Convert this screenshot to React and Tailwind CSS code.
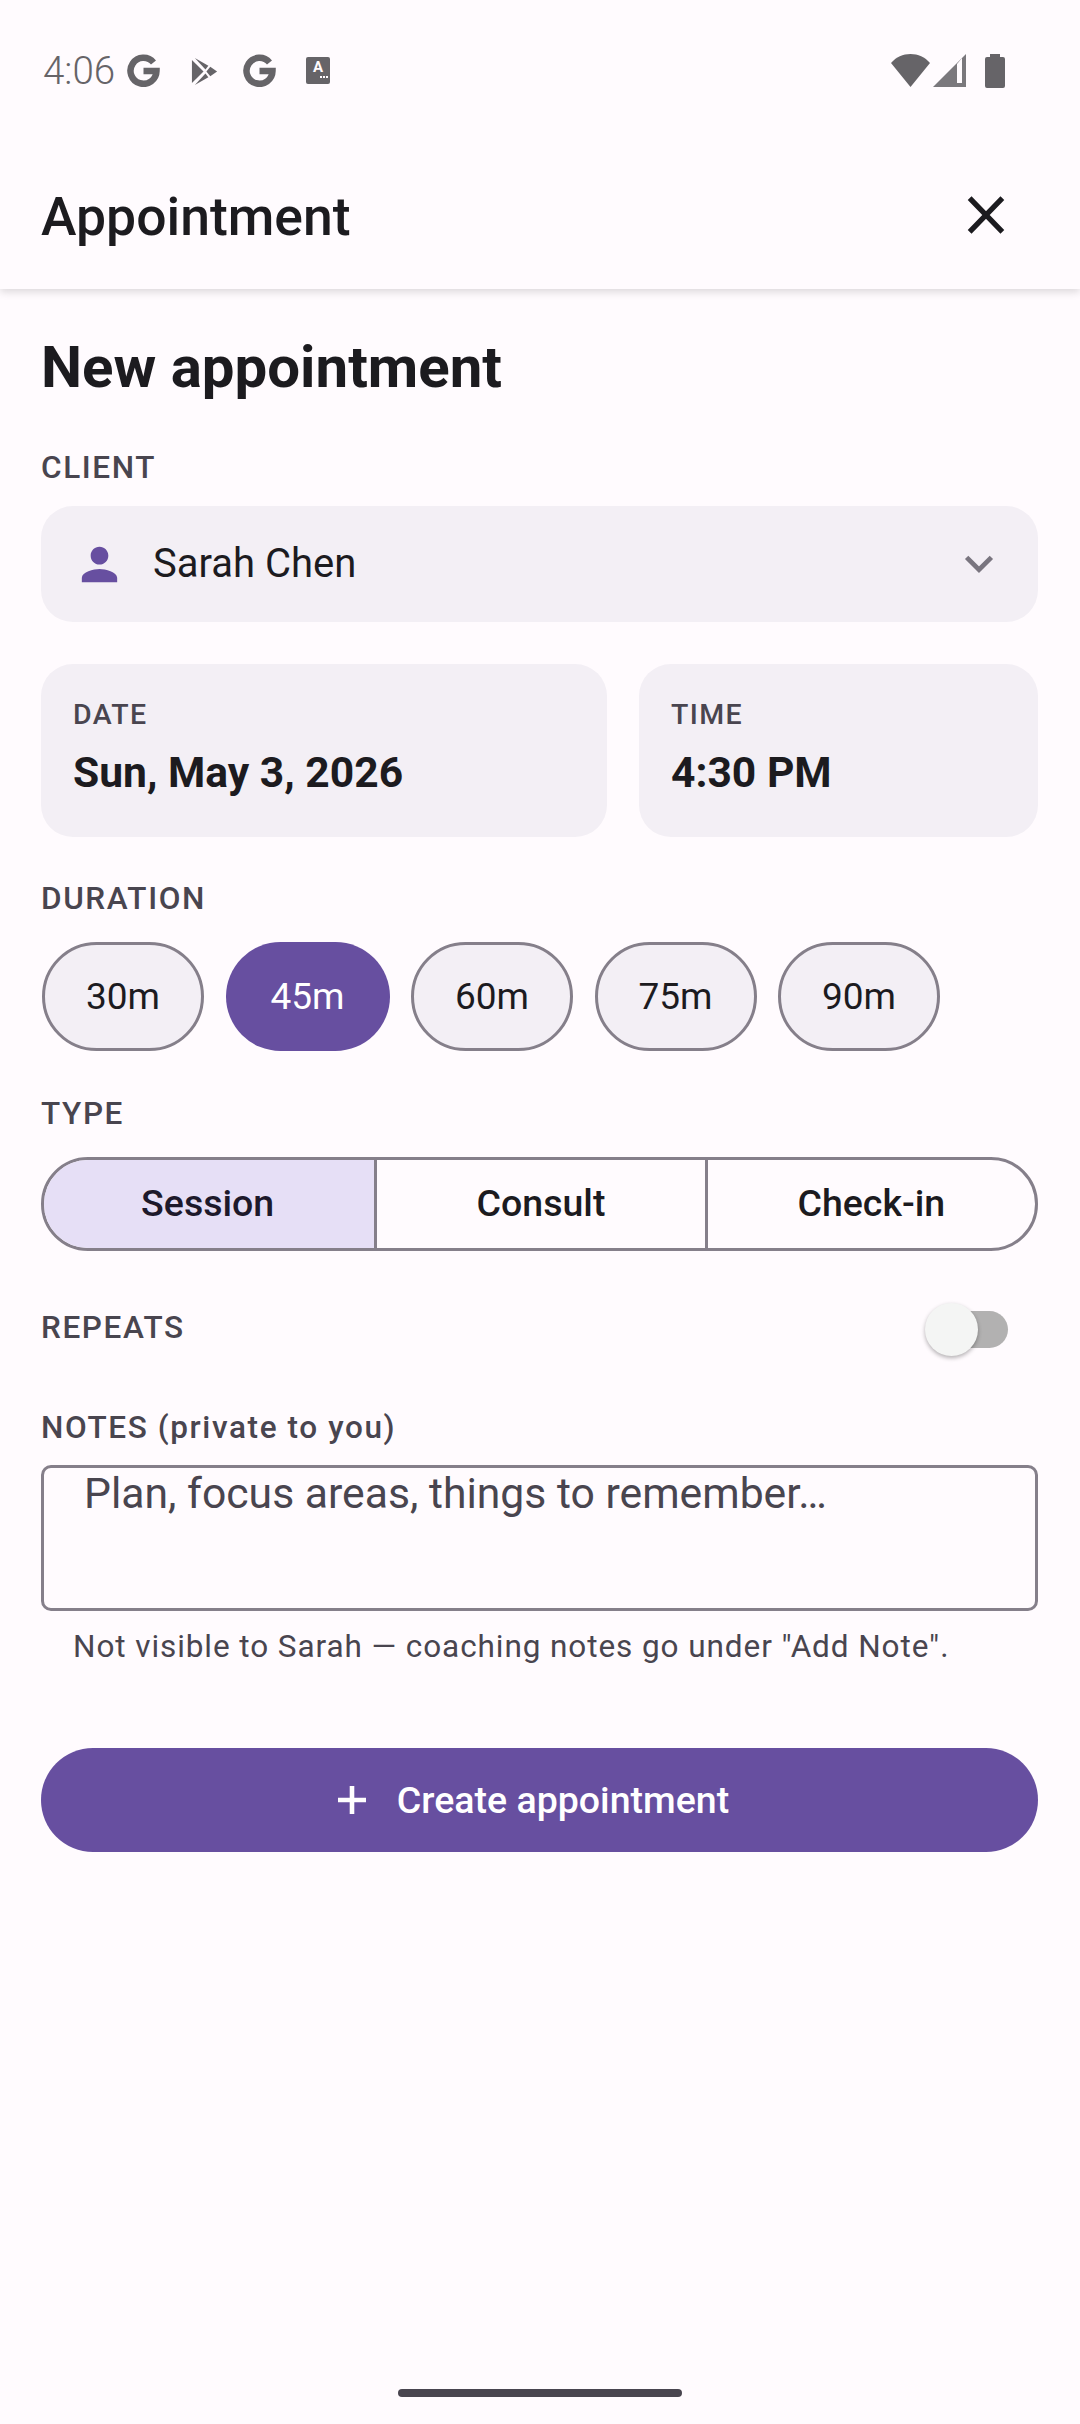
import React from "react";

const Label = ({ children, className = "" }) => (
  <div className={`text-[31.5px] leading-[40px] font-medium tracking-[1.6px] text-[#49454f] ${className}`}>
    {children}
  </div>
);

const StatusBar = () => (
  <div className="relative z-10 h-[92px] bg-[#fffbfe] pt-[48px] pl-[43px] pr-[75px] flex items-start text-[#666468]">
    <span className="text-[38.5px] leading-[42px] font-light w-[84px] mt-[2px]">4:06</span>
    <svg viewBox="0 0 32 33" className="w-[33px] h-[33px] mt-[6px]" fill="none">
      <path d="M26 8.500A13 13 0 1 0 29 17H16" stroke="currentColor" strokeWidth="6.500" />
    </svg>
    <svg viewBox="0 0 26 30" className="w-[27px] h-[29px] mt-[9px] ml-[31px]" fill="currentColor">
      <path d="M0 3 12 15 0 27Z" />
      <path d="M3 1 17 9 14 13Z" />
      <path d="M3 29 17 21 14 17Z" />
      <path d="M19 10 26 15 19 20 15 15Z" />
    </svg>
    <svg viewBox="0 0 32 33" className="w-[33px] h-[33px] mt-[6px] ml-[25px]" fill="none">
      <path d="M26 8.500A13 13 0 1 0 29 17H16" stroke="currentColor" strokeWidth="6.500" />
    </svg>
    <div className="w-[24px] h-[27px] mt-[9px] ml-[30px] bg-current rounded-[2px] flex flex-col items-center">
      <span className="text-[15px] leading-[15px] font-bold text-[#fffbfe] mt-[3px]">A</span>
      <span className="flex gap-[1px] mt-[1px] self-end mr-[2px]">
        <i className="w-[2px] h-[2px] bg-[#fffbfe]" />
        <i className="w-[2px] h-[2px] bg-[#fffbfe]" />
        <i className="w-[2px] h-[2px] bg-[#fffbfe]" />
      </span>
    </div>
    <div className="flex-1" />
    <svg viewBox="0 0 39 33" className="w-[39px] h-[33px] mt-[6px]" fill="currentColor">
      <path d="M0 9C5 3 12 0 19.500 0S34 3 39 9L19.500 33Z" />
    </svg>
    <svg viewBox="0 0 33 33" className="w-[33px] h-[33px] mt-[6px] ml-[3px]">
      <path d="M33 0V33H0Z" fill="#7a787c" />
      <path d="M24 10 29 4V29H24Z" fill="#fffbfe" />
    </svg>
    <svg viewBox="0 0 20 34" className="w-[20px] h-[34px] mt-[6px] ml-[19px]" fill="currentColor">
      <path d="M5 0H15V3H18A2 2 0 0 1 20 5V32A2 2 0 0 1 18 34H2A2 2 0 0 1 0 32V5A2 2 0 0 1 2 3H5Z" />
    </svg>
  </div>
);

const Chip = ({ label, selected }) => (
  <div
    className={`h-[109px] rounded-full flex items-center justify-center text-[37px] ${
      selected
        ? "w-[164px] bg-[#674fa0] text-white"
        : "w-[162px] bg-[#f3eff5] border-[3px] border-[#857f8a] text-[#1c1b1f]"
    }`}
  >
    {label}
  </div>
);

const Segment = ({ label, selected, className = "" }) => (
  <div
    className={`flex-1 flex items-center justify-center pb-[2px] text-[37.5px] font-medium ${
      selected ? "bg-[#e6dff6] text-[#1d192b]" : "text-[#1c1b1f]"
    } ${className}`}
  >
    {label}
  </div>
);

export default function App() {
  return (
    <div
      className="w-[1080px] h-[2424px] bg-[#fffbfe] flex flex-col overflow-hidden"
      style={{ fontFamily: "Roboto, sans-serif" }}
    >
      <StatusBar />

      {/* App bar */}
      <div className="h-[197px] flex items-center justify-between pl-[41px] pr-[75px] pt-[54px] shadow-[0_3px_8px_rgba(0,0,0,0.14)]">
        <h1 className="text-[53.500px] font-medium text-[#1c1b1f]">Appointment</h1>
        <svg viewBox="0 0 35 36" className="w-[38px] h-[38px] mb-[6px]" fill="none">
          <path d="M2 2 33 34M33 2 2 34" stroke="#1c1b1f" strokeWidth="5" />
        </svg>
      </div>

      <div className="flex-1 flex flex-col px-[41px] pr-[42px]">
        <h2 className="text-[58.2px] leading-[76px] font-bold text-[#1c1b1f] mt-[40px]">
          New appointment
        </h2>

        <Label className="mt-[43px]">CLIENT</Label>
        <div className="mt-[18px] h-[116px] rounded-[32px] bg-[#f3eff5] flex items-center pl-[32px] pr-[32px]">
          <svg viewBox="0 0 24 24" className="w-[53px] h-[53px]" fill="#674fa0">
            <path d="M12 12c2.210 0 4-1.790 4-4s-1.790-4-4-4-4 1.790-4 4 1.790 4 4 4zm0 2c-2.670 0-8 1.340-8 4v2h16v-2c0-2.660-5.330-4-8-4z" />
          </svg>
          <span className="ml-[27px] text-[40px] text-[#1c1b1f] flex-1">Sarah Chen</span>
          <svg viewBox="0 0 24 24" className="w-[54px] h-[54px] mb-[2px]" fill="none">
            <path d="M6.500 9.500l5.500 5.500 5.500-5.500" stroke="#79757f" strokeWidth="2.100" />
          </svg>
        </div>

        <div className="mt-[42px] flex gap-[32px]">
          <div className="w-[566px] h-[173px] rounded-[32px] bg-[#f3eff5] pl-[32px] pt-[33px]">
            <div className="text-[28.5px] leading-[36px] font-medium tracking-[1.4px] text-[#49454f]">DATE</div>
            <div className="text-[42.600px] leading-[56px] font-bold text-[#1c1b1f] mt-[11px]">Sun, May 3, 2026</div>
          </div>
          <div className="flex-1 h-[173px] rounded-[32px] bg-[#f3eff5] pl-[32px] pt-[33px]">
            <div className="text-[28.5px] leading-[36px] font-medium tracking-[1.4px] text-[#49454f]">TIME</div>
            <div className="text-[42.600px] leading-[56px] font-bold text-[#1c1b1f] mt-[11px]">4:30 PM</div>
          </div>
        </div>

        <Label className="mt-[42px]">DURATION</Label>
        <div className="mt-[23px] ml-[1px] flex gap-[21.5px]">
          <Chip label="30m" />
          <Chip label="45m" selected />
          <Chip label="60m" />
          <Chip label="75m" />
          <Chip label="90m" />
        </div>

        <Label className="mt-[43px]">TYPE</Label>
        <div className="mt-[23px] h-[94px] flex rounded-[47px] border-[3px] border-[#857f8a] overflow-hidden">
          <Segment label="Session" selected className="pr-[3px]" />
          <Segment label="Consult" className="border-l-[3px] border-[#857f8a]" />
          <Segment label="Check-in" className="border-l-[3px] border-[#857f8a]" />
        </div>

        <div className="mt-[52px] h-[53px] flex items-center justify-between">
          <Label className="mb-[3px]">REPEATS</Label>
          <div className="relative w-[68px] h-[37px] mr-[30px] rounded-full bg-[#b2b1b1]">
            <div className="absolute left-[-15px] top-[-8px] w-[53px] h-[53px] rounded-full bg-[#f4f5f4] shadow-[0_2px_4px_rgba(0,0,0,0.3)]" />
          </div>
        </div>

        <Label className="mt-[52px]">NOTES (private to you)</Label>
        <div className="mt-[17px] h-[146px] rounded-[10px] border-[3px] border-[#857f8a] pl-[40px] text-[42.700px] leading-[50px] text-[#49454f]">
          Plan, focus areas, things to remember…
        </div>
        <div className="mt-[16px] pl-[32px] text-[31.500px] leading-[40px] tracking-[0.92px] text-[#49454f]">
          Not visible to Sarah — coaching notes go under "Add Note".
        </div>

        <div className="mt-[81px] h-[104px] rounded-[52px] bg-[#674fa0] flex items-center justify-center gap-[21px] pr-[22px] text-white text-[37.500px] font-medium">
          <svg viewBox="0 0 24 24" className="w-[48px] h-[48px]" fill="none">
            <path d="M12 5v14M5 12h14" stroke="#ffffff" strokeWidth="2.300" />
          </svg>
          Create appointment
        </div>

        <div className="flex-1" />
        <div className="self-center mb-[27px] w-[284px] h-[8px] rounded-full bg-[#49454f]" />
      </div>
    </div>
  );
}
